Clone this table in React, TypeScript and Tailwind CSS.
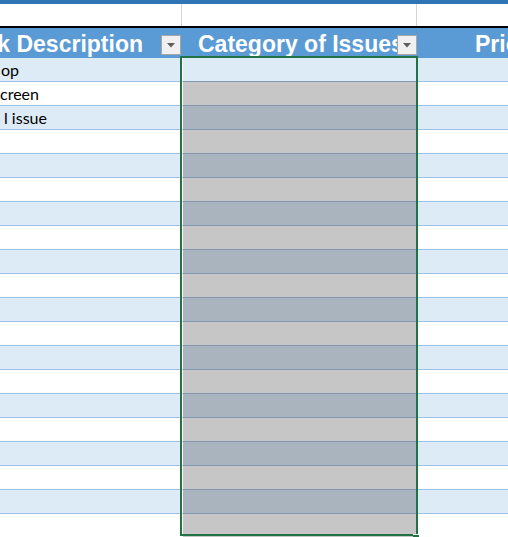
import React from "react";

const rows = [
  { task: "op", pad: "pl-[1px]" },
  { task: "creen", pad: "pl-0" },
  { task: "l issue", pad: "pl-[4px]" },
  ...Array.from({ length: 17 }, () => ({ task: "", pad: "pl-0" })),
];

function FilterButton() {
  return (
    <span className="absolute right-0 top-[7px] flex h-[20px] w-[20px] items-center justify-center border border-[#a6a6a6] bg-[#f0f0f0]">
      <svg width="8" height="5" viewBox="0 0 8 5" aria-hidden>
        <path d="M0 0h8L4 4.5z" fill="#5f5f5f" />
      </svg>
    </span>
  );
}

export default function App() {
  return (
    <div className="relative h-[537px] w-[508px] overflow-hidden bg-white font-['Liberation_Sans',Arial,sans-serif]">
      <div className="h-[4px] bg-[#2e75b6]" />

      {/* empty row above the table */}
      <div className="flex h-[22px]">
        <div className="w-[182px] shrink-0 border-r border-[#d4d4d4]" />
        <div className="w-[235px] shrink-0 border-r border-[#d4d4d4]" />
        <div className="flex-1" />
      </div>
      <div className="h-[2px] bg-black" />

      {/* header */}
      <div className="flex h-[30px] bg-[#5b9bd5] text-[23px] font-bold leading-[30px] text-white">
        <div className="relative flex w-[181px] shrink-0 justify-end overflow-hidden whitespace-nowrap pr-[38px]">
          <span className="relative top-[1px]">Task Description</span>
          <FilterButton />
        </div>
        <div className="relative ml-[1px] w-[235px] shrink-0 overflow-hidden whitespace-nowrap pl-[16px]">
          <span className="relative top-[1px]">Category of Issues</span>
          <FilterButton />
        </div>
        <div className="flex-1 overflow-hidden whitespace-nowrap pl-[58px]">
          <span className="relative top-[1px]">Priority</span>
        </div>
      </div>

      {/* data rows */}
      {rows.map((r, i) => {
        const band = i % 2 === 0 ? "bg-[#ddebf7]" : "bg-white";
        const sel = i === 0 ? "bg-[#ddebf7]" : i % 2 === 0 ? "bg-[#aab4be]" : "bg-[#c6c6c6]";
        return (
          <div key={i} className="flex h-[24px] font-['Lato',sans-serif] text-[16px] leading-[23px] text-black">
            <div className={`w-[182px] shrink-0 overflow-hidden whitespace-nowrap border-b border-[#9bc2e6] ${band} ${r.pad}`}>
              {r.task}
            </div>
            <div className={`w-[235px] shrink-0 border-b border-l border-r border-b-[#8497b0] border-l-white border-r-white ${sel}`} />
            <div className={`flex-1 border-b border-[#9bc2e6] ${band}`} />
          </div>
        );
      })}

      {/* selection outline over column B */}
      <div className="pointer-events-none absolute left-[180px] top-[56px] h-[480px] w-[238px] border-2 border-[#217346]" />
      <div className="pointer-events-none absolute left-[413px] top-[534px] h-[5px] w-[6px] border-t border-white bg-[#217346]" />
    </div>
  );
}
